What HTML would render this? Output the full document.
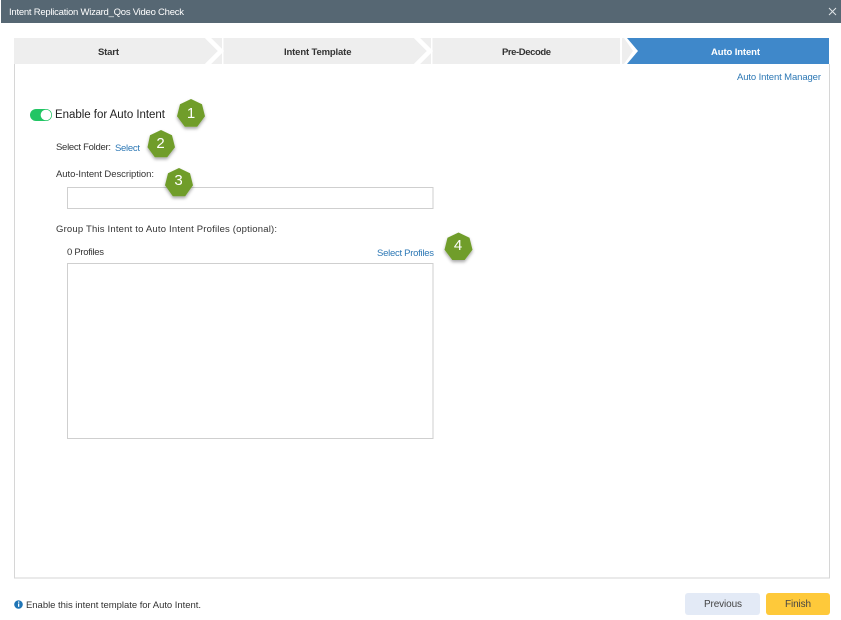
<!DOCTYPE html>
<html>
<head>
<meta charset="utf-8">
<title>Intent Replication Wizard</title>
<style>
html,body{margin:0;padding:0;background:#fff;width:841px;height:620px;overflow:hidden}
svg{display:block}
text{font-family:"Liberation Sans",sans-serif;font-size:9.5px;fill:#333}
.b{font-weight:bold}
.l{fill:#2d78b5}
.n{fill:#fff;font-size:15px;text-anchor:middle}
</style>
</head>
<body>
<svg width="841" height="620" viewBox="0 0 841 620" xmlns="http://www.w3.org/2000/svg">
<defs>
<filter id="s" x="-30%" y="-30%" width="160%" height="170%"><feDropShadow dx="0" dy="2" stdDeviation="1.6" flood-color="#000" flood-opacity=".35"/></filter>
<clipPath id="t"><rect x="0" y="38" width="841" height="26"/></clipPath>
</defs>
<rect width="841" height="620" fill="#fff"/>
<rect x="1" y="0" width="840" height="23" fill="#566773"/>
<text x="9" y="15" textLength="175" lengthAdjust="spacing" style="fill:#fff;font-size:9.5px">Intent Replication Wizard_Qos Video Check</text>
<path d="M829 8l7 7M836 8l-7 7" stroke="#dfe4e7" stroke-width="1" fill="none"/>

<path d="M14.500 64V578H829.500V64" fill="#fff" stroke="#d6d6d6"/>

<g clip-path="url(#t)">
<rect x="14" y="38" width="208" height="26" fill="#eeeeee"/>
<rect x="223.500" y="38" width="207.500" height="26" fill="#eeeeee"/>
<rect x="432.500" y="38" width="187.500" height="26" fill="#eeeeee"/>
<path d="M206 36L221 51L206 66" fill="none" stroke="#fff" stroke-width="4.500"/>
<path d="M415 36L430 51L415 66" fill="none" stroke="#fff" stroke-width="4.500"/>
<path d="M622 38H624L633 51L624 64H622Z" fill="#eeeeee"/>
<path d="M627 38H829V64H627L638 51Z" fill="#3f88ca"/>
</g>

<text class="b" x="98" y="55" textLength="21" lengthAdjust="spacing" style="font-size:9.500px">Start</text>
<text class="b" x="284" y="55" textLength="67.500" lengthAdjust="spacing" style="font-size:9.500px">Intent Template</text>
<text class="b" x="502" y="55" textLength="49" lengthAdjust="spacing" style="font-size:9.500px">Pre-Decode</text>
<text class="b" x="711" y="55" textLength="49" lengthAdjust="spacing" style="font-size:9.500px;fill:#fff">Auto Intent</text>
<text class="l" x="737" y="80" textLength="84" lengthAdjust="spacing" style="font-size:9.500px">Auto Intent Manager</text>

<rect x="30" y="109" width="22" height="12" rx="6" fill="#22c564"/>
<circle cx="46" cy="115" r="5.300" fill="#fff"/>
<text x="55" y="118" textLength="110" lengthAdjust="spacing" style="font-size:11.500px;fill:#222">Enable for Auto Intent</text>

<text x="56" y="150" textLength="55" lengthAdjust="spacing" style="font-size:9.500px">Select Folder:</text>
<text class="l" x="115" y="151" textLength="25" lengthAdjust="spacing" style="font-size:9.500px">Select</text>
<text x="56" y="177" textLength="98" lengthAdjust="spacing" style="font-size:9.500px">Auto-Intent Description:</text>
<rect x="67.500" y="187.500" width="365.500" height="21" fill="#fff" stroke="#cfcfcf"/>
<text x="56" y="232" textLength="221" lengthAdjust="spacing" style="font-size:9.500px">Group This Intent to Auto Intent Profiles (optional):</text>
<text x="67" y="255" textLength="37" lengthAdjust="spacing" style="font-size:9.500px">0 Profiles</text>
<text class="l" x="377" y="256" textLength="57" lengthAdjust="spacing" style="font-size:9.500px">Select Profiles</text>
<rect x="67.500" y="263.500" width="365.500" height="175" fill="#fff" stroke="#cfcfcf"/>

<g filter="url(#s)" fill="#6f9d2b">
<polygon points="191,99 202,104.300 205,116.200 197.200,126.700 184.800,126.700 177,116.200 180,104.300"/>
<polygon points="161,130 172,135.300 175,147.200 167.200,157.200 154.800,157.200 147.500,147.200 150,135.300"/>
<polygon points="179,168 190,173.300 193,185.200 185.200,196.200 172.800,196.200 165,185.200 168,173.300"/>
<polygon points="458.500,232.500 469.500,237.800 472.500,249.700 464.700,260 452.300,260 444.500,249.700 447.500,237.800"/>
</g>
<text class="n" x="191" y="118">1</text>
<text class="n" x="160.500" y="148">2</text>
<text class="n" x="178.500" y="185">3</text>
<text class="n" x="458" y="250">4</text>

<circle cx="18.500" cy="604.500" r="4.300" fill="#1f74b5"/>
<rect x="18" y="603.500" width="1.300" height="3.300" fill="#fff"/>
<rect x="18" y="601.500" width="1.300" height="1.200" fill="#fff"/>
<text x="26" y="608" textLength="175" lengthAdjust="spacing" style="font-size:9.500px">Enable this intent template for Auto Intent.</text>

<rect x="685" y="593" width="75" height="22" rx="3" fill="#e3eaf6"/>
<text x="704" y="607" textLength="38" lengthAdjust="spacing" style="font-size:10px;fill:#444">Previous</text>
<rect x="766" y="593" width="64" height="22" rx="3" fill="#fec93a"/>
<text x="785" y="607" textLength="26" lengthAdjust="spacing" style="font-size:10px;fill:#444">Finish</text>
</svg>
</body>
</html>
